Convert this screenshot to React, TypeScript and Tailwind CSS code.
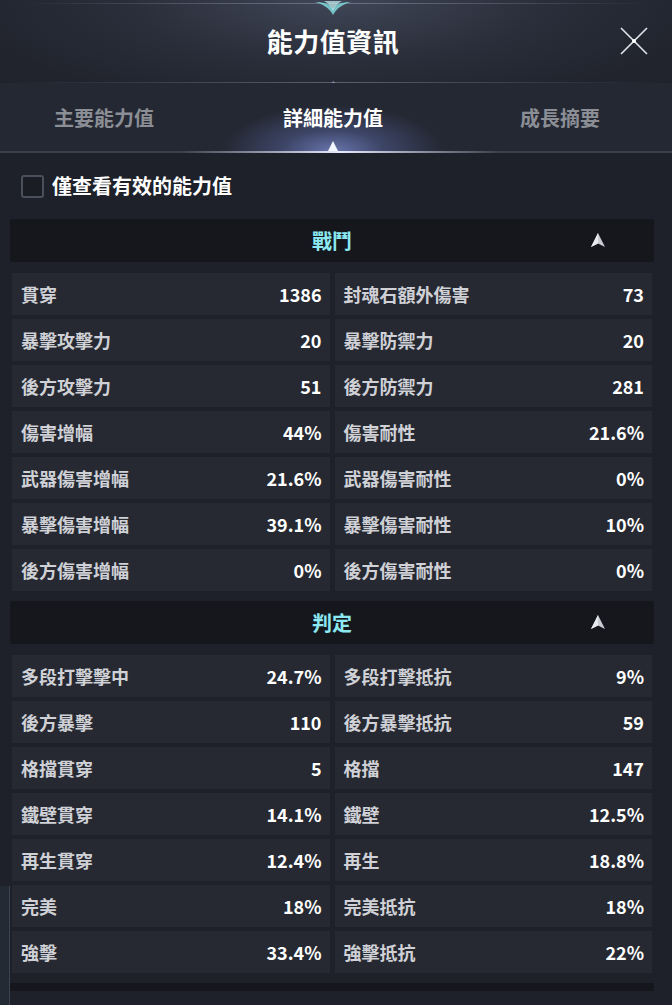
import type { ReactNode } from 'react'

type Stat = [string, string, string, string]

const combat: Stat[] = [
  ['貫穿', '1386', '封魂石額外傷害', '73'],
  ['暴擊攻擊力', '20', '暴擊防禦力', '20'],
  ['後方攻擊力', '51', '後方防禦力', '281'],
  ['傷害增幅', '44%', '傷害耐性', '21.6%'],
  ['武器傷害增幅', '21.6%', '武器傷害耐性', '0%'],
  ['暴擊傷害增幅', '39.1%', '暴擊傷害耐性', '10%'],
  ['後方傷害增幅', '0%', '後方傷害耐性', '0%']
]

const judge: Stat[] = [
  ['多段打擊擊中', '24.7%', '多段打擊抵抗', '9%'],
  ['後方暴擊', '110', '後方暴擊抵抗', '59'],
  ['格擋貫穿', '5', '格擋', '147'],
  ['鐵壁貫穿', '14.1%', '鐵壁', '12.5%'],
  ['再生貫穿', '12.4%', '再生', '18.8%'],
  ['完美', '18%', '完美抵抗', '18%'],
  ['強擊', '33.4%', '強擊抵抗', '22%']
]

const font = { fontFamily: '"Noto Sans CJK TC", "Noto Sans", sans-serif' }

function Arrow() {
  return (
    <svg width="16" height="16" viewBox="0 0 16 16" aria-hidden="true">
      <path d="M8 1 L15 15 L8 11.5 L1 15 Z" fill="#c9ccd2" />
      <path d="M8 1 L8 11.5 L1 15 Z" fill="#e8eaee" />
    </svg>
  )
}

function Cell({ label, value }: { label: string; value: string }) {
  return (
    <div className="flex h-[42px] items-center justify-between bg-[#262932] pl-[9px] pr-[8px]">
      <span className="text-[18px] font-bold text-[#cfd1d6]">{label}</span>
      <span className="text-[18px] font-bold text-white">{value}</span>
    </div>
  )
}

function Section({ title, rows, children }: { title: string; rows: Stat[]; children?: ReactNode }) {
  return (
    <div className="ml-[10px] w-[644px]">
      <div className="relative flex h-[43px] items-center justify-center rounded-[2px] bg-[#15171c]">
        <span className="text-[20px] font-bold text-[#8ce9f2]">{title}</span>
        <span className="absolute left-[580px] top-[13px]">
          <Arrow />
        </span>
      </div>
      <div className="mt-[11px] grid grid-cols-2 gap-x-[5px] gap-y-[4px] px-[2px]">
        {rows.map(([a, av, b, bv]) => (
          <div key={a} className="contents">
            <Cell label={a} value={av} />
            <Cell label={b} value={bv} />
          </div>
        ))}
      </div>
      {children}
    </div>
  )
}

export default function App() {
  return (
    <div className="relative h-[1005px] w-[672px] overflow-hidden bg-[#1e2129]" style={font}>
      {/* header */}
      <div className="relative h-[82px] bg-[radial-gradient(ellipse_380px_110px_at_50%_0%,#404657_0%,#2a2e3a_55%,#21242d_100%)]">
        <div className="absolute left-[20px] right-[20px] top-[3px] h-px bg-gradient-to-r from-transparent via-[#6b7283] to-transparent" />
        <svg className="absolute left-[311px] top-0" width="44" height="16" viewBox="0 0 44 16" aria-hidden="true">
          <path d="M22 15 C18 8 12 4 4 2 C14 2 19 4 22 9 C25 4 30 2 40 2 C32 4 26 8 22 15 Z" fill="#7fd6d9" opacity="0.85" />
          <path d="M22 11 C20 6 17 3 13 1 L31 1 C27 3 24 6 22 11 Z" fill="#c8f3f2" opacity="0.7" />
        </svg>
        <div className="flex h-full items-center justify-center pb-[2px] pr-[6px]">
          <h1 className="text-[26px] font-bold tracking-[0.5px] text-white">能力值資訊</h1>
        </div>
        <button type="button" aria-label="關閉" className="absolute left-[618px] top-[25px]">
          <svg width="32" height="32" viewBox="0 0 32 32">
            <path d="M3 3 L16 16 L29 29 M29 3 L16 16 L3 29" stroke="#dfe3ea" strokeWidth="1.6" />
            <circle cx="16" cy="16" r="2" fill="#ffffff" />
          </svg>
        </button>
      </div>

      {/* divider */}
      <div className="relative h-px bg-gradient-to-r from-transparent via-[#596072] to-transparent">
        <span className="absolute left-[330px] top-[-3px] text-[8px] leading-none text-[#8a92a4]">✦</span>
      </div>

      {/* tabs */}
      <div className="relative h-[68px] bg-[#242833]">
        <div className="absolute bottom-0 left-[200px] h-[56px] w-[266px] bg-[radial-gradient(ellipse_110px_46px_at_50%_100%,#6874ad_0%,#3e4668_45%,transparent_100%)]" />
        <div className="relative grid h-full grid-cols-3 items-center pt-[2px]">
          <span className="pr-[16px] text-center text-[20px] font-bold text-[#8b8e95]">主要能力值</span>
          <span className="pr-[6px] text-center text-[20px] font-bold text-white">詳細能力值</span>
          <span className="text-center text-[20px] font-bold text-[#8b8e95]">成長摘要</span>
        </div>
        <svg className="absolute bottom-0 left-[327px]" width="12" height="10" viewBox="0 0 12 10" aria-hidden="true">
          <path d="M6 0 L11 10 L1 10 Z" fill="#f3f5ff" />
        </svg>
      </div>
      <div className="relative h-[2px] bg-[#3a3f4c]">
        <div className="absolute left-[180px] top-0 h-[2px] w-[320px] bg-gradient-to-r from-transparent via-[#e6ebff] to-transparent" />
      </div>

      {/* filter */}
      <div className="flex h-[66px] items-center gap-[8px] pl-[21px]">
        <span className="h-[23px] w-[23px] rounded-[3px] border-2 border-[#4a4f5b] bg-[#1a1d24]" />
        <span className="text-[20px] font-bold text-white">僅查看有效的能力值</span>
      </div>

      <Section title="戰鬥" rows={combat} />
      <div className="h-[10px]" />
      <Section title="判定" rows={judge}>
        <div className="mt-[10px] h-[8px] bg-[#15171c]" />
      </Section>

      {/* edge of panel behind */}
      <div className="absolute left-0 top-[886px] h-[120px] w-[10px] border-r border-[#3c4350] bg-[#232a33]" />
    </div>
  )
}
